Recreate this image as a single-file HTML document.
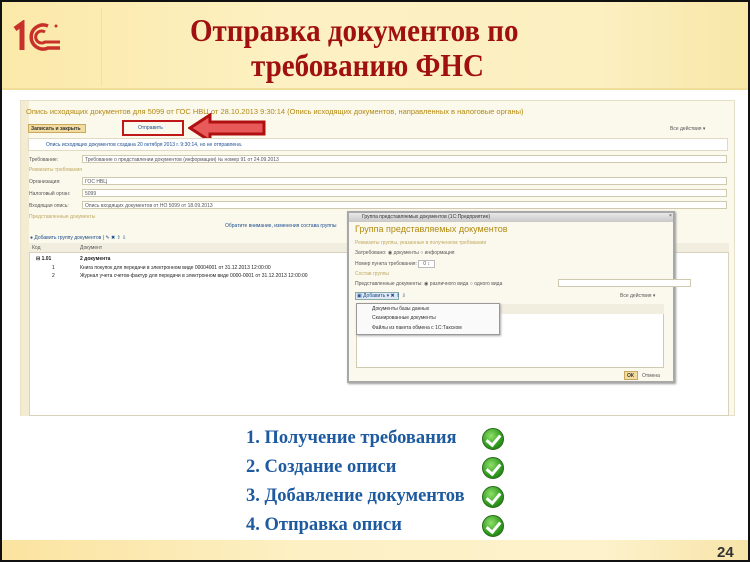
<!DOCTYPE html>
<html><head><meta charset="utf-8"><style>
*{margin:0;padding:0;box-sizing:border-box}
body{width:750px;height:562px;position:relative;overflow:hidden;background:#fff;font-family:"Liberation Sans",sans-serif}
.a{position:absolute}
.t{position:absolute;font-size:5px;color:#555;white-space:nowrap}
.in{position:absolute;background:#fff;border:1px solid #cfc9b0;height:8px}
.h{font-family:"Liberation Serif",serif;font-weight:bold;color:#a01010;font-size:29px;position:absolute;white-space:nowrap;transform:scaleY(1.08);transform-origin:0 0}
.li{font-family:"Liberation Serif",serif;font-weight:bold;color:#1d5aa0;font-size:18.5px;position:absolute;white-space:nowrap}
.ck{position:absolute;width:22px;height:22px;border-radius:50%;background:radial-gradient(circle at 40% 35%,#8fe06a,#2f9a1e 60%,#1c6d10);border:1px solid #2a6a1a}
.ck:after{content:"";position:absolute;left:6px;top:3px;width:6px;height:11px;border:solid #fff;border-width:0 3px 3px 0;transform:rotate(40deg)}
</style></head><body>
<div class="a" style="left:0;top:0;width:750px;height:90px;background:linear-gradient(90deg,#fbe9a8,#fdf1c4 40%,#fcefc0 80%,#f8e7a8);border-bottom:2px solid #f0dd9a"></div>
<div class="a" style="left:101px;top:8px;width:1px;height:78px;background:#f3dfa0"></div>
<svg class="a" style="left:12px;top:20px" width="50" height="34" viewBox="0 0 50 34">
<path d="M3 9 L10 4 L10 30" fill="none" stroke="#c8302a" stroke-width="5"/>
<path d="M36 6 A12 12 0 1 0 36 28 L48 28" fill="none" stroke="#c8302a" stroke-width="3.5"/>
<path d="M33 12 A6 6 0 1 0 33 22 L48 22" fill="none" stroke="#c8302a" stroke-width="3"/>
<circle cx="44" cy="6" r="1.5" fill="#c8302a"/>
</svg>
<div class="h" style="left:190px;top:14px">Отправка документов по</div>
<div class="h" style="left:251px;top:49px">требованию ФНС</div>

<div class="a" style="left:20px;top:100px;width:715px;height:316px;background:#fbf8ec;border:1px solid #e6e0c8"></div>
<div class="a" style="left:21px;top:101px;width:8px;height:315px;background:#f3ecd2"></div>
<div class="t" style="left:26px;top:107px;font-size:7.5px;color:#b58a10">Опись исходящих документов для 5099 от ГОС НВЦ от 28.10.2013 9:30:14 (Опись исходящих документов, направленных в налоговые органы)</div>
<div class="a" style="left:28px;top:124px;width:58px;height:9px;background:#f3dca0;border:1px solid #c9a860"></div>
<div class="t" style="left:31px;top:126px;font-weight:bold;color:#333">Записать и закрыть</div>
<div class="a" style="left:122px;top:120px;width:62px;height:16px;border:2px solid #c01818"></div>
<div class="t" style="left:138px;top:125px;color:#1c4e90">Отправить</div>
<svg class="a" style="left:188px;top:113px" width="80" height="30"><path d="M2 15 L22 2 L22 9 L76 9 L76 21 L22 21 L22 28 Z" fill="#e85a5a" stroke="#b01010" stroke-width="3"/></svg>
<div class="t" style="left:670px;top:126px">Все действия ▾</div>
<div class="a" style="left:28px;top:138px;width:700px;height:13px;background:#fff;border:1px solid #e0dac4"></div>
<div class="t" style="left:46px;top:142px;color:#1c4e90">Опись исходящих документов создана 20 октября 2013 г. 9:30:14, но не отправлена.</div>
<div class="t" style="left:29px;top:157px">Требование:</div><div class="in" style="left:82px;top:155px;width:645px"></div>
<div class="t" style="left:85px;top:157px">Требование о представлении документов (информации) № номер 91 от 24.09.2013</div>
<div class="t" style="left:29px;top:167px;color:#c0a860">Реквизиты требования</div>
<div class="t" style="left:29px;top:179px">Организация:</div><div class="in" style="left:82px;top:177px;width:645px"></div><div class="t" style="left:85px;top:179px">ГОС НВЦ</div>
<div class="t" style="left:29px;top:191px">Налоговый орган:</div><div class="in" style="left:82px;top:189px;width:645px"></div><div class="t" style="left:85px;top:191px">5099</div>
<div class="t" style="left:29px;top:203px">Входящая опись:</div><div class="in" style="left:82px;top:201px;width:645px"></div><div class="t" style="left:85px;top:203px">Опись входящих документов от НО 5099 от 18.09.2013</div>
<div class="t" style="left:29px;top:214px;color:#c0a860">Представленные документы</div>
<div class="t" style="left:225px;top:223px;color:#1c4e90">Обратите внимание, изменения состава группы</div>
<div class="t" style="left:30px;top:235px;color:#1c4e90">● Добавить группу документов | ✎ ✖ ⇧ ⇩</div>
<div class="a" style="left:29px;top:243px;width:700px;height:173px;background:#fff;border:1px solid #d8d2bc"></div>
<div class="a" style="left:29px;top:243px;width:700px;height:10px;background:#f2eedf;border-bottom:1px solid #d8d2bc"></div>
<div class="t" style="left:32px;top:245px">Код</div><div class="t" style="left:80px;top:245px">Документ</div>
<div class="t" style="left:36px;top:256px;font-weight:bold;color:#222">⊟ 1.01</div><div class="t" style="left:80px;top:256px;font-weight:bold;color:#222">2 документа</div>
<div class="t" style="left:52px;top:265px;color:#222">1</div><div class="t" style="left:80px;top:265px;color:#222">Книга покупок для передачи в электронном виде 00004001 от 31.12.2013 12:00:00</div>
<div class="t" style="left:52px;top:273px;color:#222">2</div><div class="t" style="left:80px;top:273px;color:#222">Журнал учета счетов-фактур для передачи в электронном виде 0000-0001 от 31.12.2013 12:00:00</div>

<div class="a" style="left:347px;top:211px;width:328px;height:172px;background:#fbf9ee;border:2px solid #a8a8a8;box-shadow:1px 1px 2px #999"></div>
<div class="a" style="left:349px;top:213px;width:324px;height:9px;background:linear-gradient(#e8e8e8,#c8c8c8)"></div>
<div class="t" style="left:362px;top:214px;color:#333">Группа представляемых документов (1С:Предприятие)</div>
<div class="t" style="left:669px;top:213px;color:#333">×</div>
<div class="t" style="left:355px;top:224px;font-size:9px;color:#b08a10">Группа представляемых документов</div>
<div class="t" style="left:355px;top:240px;color:#c0a860">Реквизиты группы, указанные в полученном требовании</div>
<div class="t" style="left:355px;top:250px">Затребовано: ◉ документы ○ информация</div>
<div class="t" style="left:355px;top:261px">Номер пункта требования: <span style="border:1px solid #bbb;background:#fff;padding:0 4px">0 ↕</span></div>
<div class="t" style="left:355px;top:271px;color:#c0a860">Состав группы</div>
<div class="t" style="left:355px;top:281px">Представленные документы: ◉ различного вида ○ одного вида</div>
<div class="in" style="left:558px;top:279px;width:133px"></div>
<div class="a" style="left:355px;top:292px;width:44px;height:8px;background:#dfe8f4;border:1px solid #8aa"></div>
<div class="t" style="left:357px;top:293px;color:#1c4e90">▣ Добавить ▾ ✖ ⇧ ⇩</div>
<div class="t" style="left:620px;top:293px">Все действия ▾</div>
<div class="a" style="left:356px;top:304px;width:308px;height:64px;background:#fff;border:1px solid #d0cab0"></div>
<div class="a" style="left:356px;top:304px;width:308px;height:10px;background:#f2eedf"></div>
<div class="a" style="left:356px;top:303px;width:144px;height:32px;background:#fafafa;border:1px solid #999;box-shadow:1px 1px 2px #aaa"></div>
<div class="t" style="left:372px;top:306px;color:#333">Документы базы данных</div>
<div class="t" style="left:372px;top:315px;color:#333">Сканированные документы</div>
<div class="t" style="left:372px;top:325px;color:#333">Файлы из пакета обмена с 1С:Такском</div>
<div class="a" style="left:624px;top:371px;width:14px;height:9px;background:#f3dca0;border:1px solid #c9a860"></div>
<div class="t" style="left:627px;top:373px;font-weight:bold;color:#333">ОК</div><div class="t" style="left:642px;top:373px">Отмена</div>

<div class="li" style="left:246px;top:428px">1. Получение требования</div>
<div class="li" style="left:246px;top:457px">2. Создание описи</div>
<div class="li" style="left:246px;top:486px">3. Добавление документов</div>
<div class="li" style="left:246px;top:515px">4. Отправка описи</div>
<div class="ck" style="left:482px;top:428px"></div>
<div class="ck" style="left:482px;top:457px"></div>
<div class="ck" style="left:482px;top:486px"></div>
<div class="ck" style="left:482px;top:515px"></div>
<div class="a" style="left:0;top:540px;width:750px;height:22px;background:linear-gradient(90deg,#fbe3a0,#fdf0c4 40%,#fdf2cc 80%,#f8e4a8)"></div>
<div class="a" style="left:717px;top:544px;font:bold 15px 'Liberation Sans',sans-serif;color:#333">24</div>
<div class="a" style="left:0;top:0;width:750px;height:562px;border:2px solid #111"></div>
</body></html>
